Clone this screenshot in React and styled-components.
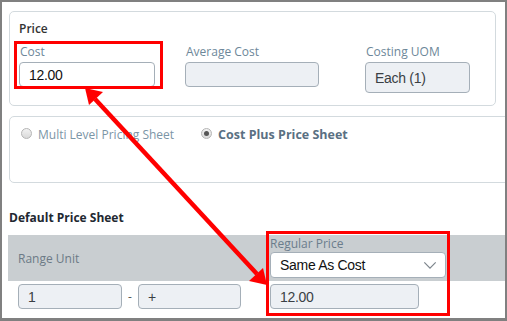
import React from 'react';
import styled, { createGlobalStyle } from 'styled-components';

const GlobalStyle = createGlobalStyle`
  html, body {
    margin: 0;
    padding: 0;
    background: #ffffff;
  }
  * {
    box-sizing: border-box;
  }
`;

const App = () => {
  return (
    <>
      <GlobalStyle />
      <Frame>
        <PriceCard>
          <CardTitle>Price</CardTitle>
          <FieldRow>
            <Field width={136} highlighted>
              <Label>Cost</Label>
              <Input>12.00</Input>
            </Field>
            <Field width={134} gap={30}>
              <Label>Average Cost</Label>
              <Input readOnly />
            </Field>
            <Field width={105} gap={46}>
              <Label>Costing UOM</Label>
              <Input readOnly tall>Each (1)</Input>
            </Field>
          </FieldRow>
        </PriceCard>

        <SheetCard>
          <RadioOption>
            <Radio />
            Multi Level Pricing Sheet
          </RadioOption>
          <RadioOption checked>
            <Radio checked />
            Cost Plus Price Sheet
          </RadioOption>
        </SheetCard>

        <SectionTitle>Default Price Sheet</SectionTitle>

        <Table>
          <HeaderRow>
            <RangeHead>Range Unit</RangeHead>
          </HeaderRow>
          <BodyRow>
            <RangeCell>
              <Input readOnly width={104}>1</Input>
              <Dash>-</Dash>
              <Input readOnly width={103}>+</Input>
            </RangeCell>
          </BodyRow>
          <PriceColumn>
            <HeadLabel>Regular Price</HeadLabel>
            <Select>
              Same As Cost
              <Chevron viewBox="0 0 16 10">
                <path d="M1.5 1.5 L8 8 L14.5 1.5" />
              </Chevron>
            </Select>
            <Input readOnly width={149}>12.00</Input>
          </PriceColumn>
        </Table>

        <Arrow viewBox="0 0 507 321">
          <line x1="95" y1="99" x2="257" y2="274" />
          <polygon points="85,88 103,92 89,105" />
          <polygon points="267,285 249,281 263,268" />
        </Arrow>
      </Frame>
    </>
  );
};

export default App;

const Frame = styled.div`
  position: relative;
  width: 507px;
  height: 321px;
  overflow: hidden;
  border-style: solid;
  border-color: #808080;
  border-width: 2px 2px 3px 2px;
  background: #ffffff;
  font-family: 'Open Sans', 'Liberation Sans', sans-serif;
  padding: 9px 0 0 7px;
`;

const PriceCard = styled.section`
  width: 487px;
  height: 95px;
  border: 1px solid #d3dade;
  border-radius: 5px;
  padding: 9px 0 0 9px;
`;

const CardTitle = styled.div`
  font-size: 12px;
  font-weight: 600;
  color: #333333;
  line-height: 16px;
`;

const FieldRow = styled.div`
  display: flex;
  align-items: flex-start;
  margin-top: 2px;
`;

const Field = styled.div`
  position: relative;
  display: flex;
  flex-direction: column;
  width: ${({ width }) => width}px;
  margin-left: ${({ gap }) => gap || 0}px;
  padding-top: 4px;

  ${({ highlighted }) =>
    highlighted &&
    `
    &::after {
      content: '';
      position: absolute;
      left: -5px;
      top: 2px;
      right: -8px;
      bottom: -2px;
      border: 3px solid #ff0000;
    }
  `}
`;

const Label = styled.div`
  font-size: 12px;
  line-height: 17px;
  color: #6d8799;
  height: 19px;
  padding-left: 1px;
`;

const Input = styled.div`
  width: ${({ width }) => (width ? `${width}px` : '100%')};
  height: ${({ tall }) => (tall ? 31 : 25)}px;
  display: flex;
  align-items: center;
  padding-left: 9px;
  border: 1px solid #a5afb8;
  border-radius: 4px;
  background: ${({ readOnly }) => (readOnly ? '#edf0f4' : '#ffffff')};
  font-family: 'Liberation Sans', Arial, sans-serif;
  font-size: 14px;
  letter-spacing: -0.3px;
  color: ${({ readOnly }) => (readOnly ? '#3a3f44' : '#111111')};
`;

const SheetCard = styled.section`
  margin-top: 10px;
  width: 540px;
  height: 67px;
  border: 1px solid #d3dade;
  border-radius: 5px;
  padding: 9px 0 0 11px;
  display: flex;
  align-items: flex-start;
`;

const RadioOption = styled.label`
  display: flex;
  align-items: center;
  gap: 6px;
  font-size: ${({ checked }) => (checked ? 12.5 : 12)}px;
  line-height: 17px;
  color: ${({ checked }) => (checked ? '#5a7083' : '#7b95a6')};
  font-weight: ${({ checked }) => (checked ? 700 : 400)};
  margin-right: 27px;
`;

const Radio = styled.span`
  position: relative;
  width: 11px;
  height: 11px;
  border-radius: 50%;
  border: 1px solid #b5b5b5;
  background: linear-gradient(#f2f2f2, #d9d9d9);
  margin-top: -2px;

  ${({ checked }) =>
    checked &&
    `
    &::after {
      content: '';
      position: absolute;
      left: 2px;
      top: 2px;
      width: 5px;
      height: 5px;
      border-radius: 50%;
      background: #555555;
    }
  `}
`;

const SectionTitle = styled.div`
  margin-top: 27px;
  font-size: 12px;
  font-weight: 700;
  color: #222831;
  line-height: 16px;
`;

const Table = styled.div`
  position: relative;
  margin-top: 9px;
  margin-left: -1px;
  width: 498px;
`;

const HeaderRow = styled.div`
  height: 46px;
  background: #c9ced1;
  display: flex;
  align-items: center;
  padding-left: 10px;
`;

const RangeHead = styled.div`
  font-size: 12px;
  color: #6c7a86;
  padding-top: 1px;
`;

const BodyRow = styled.div`
  height: 30px;
  padding: 3px 0 0 10px;
`;

const RangeCell = styled.div`
  display: flex;
  align-items: center;
`;

const Dash = styled.span`
  width: 16px;
  text-align: center;
  font-size: 12px;
  color: #555555;
`;

const PriceColumn = styled.div`
  position: absolute;
  left: 258px;
  top: -4px;
  width: 184px;
  height: 85px;
  border: 3px solid #ff0000;
  padding: 3px 0 0 1px;
  display: flex;
  flex-direction: column;
`;

const HeadLabel = styled.div`
  font-size: 12px;
  line-height: 14px;
  color: #6b7d8c;
  margin-bottom: 1px;
`;

const Select = styled.div`
  width: 176px;
  height: 26px;
  display: flex;
  align-items: center;
  justify-content: space-between;
  padding: 0 8px 0 9px;
  border: 1px solid #a5afb8;
  border-radius: 4px;
  background: #ffffff;
  font-family: 'Liberation Sans', Arial, sans-serif;
  font-size: 14px;
  letter-spacing: -0.3px;
  color: #111111;
  margin-bottom: 6px;
`;

const Chevron = styled.svg`
  width: 14px;
  height: 9px;
  fill: none;
  stroke: #7d858c;
  stroke-width: 1.4;
`;

const Arrow = styled.svg`
  position: absolute;
  left: -2px;
  top: -2px;
  width: 507px;
  height: 321px;
  pointer-events: none;

  line {
    stroke: #ff0000;
    stroke-width: 4.5;
  }
  polygon {
    fill: #ff0000;
  }
`;
